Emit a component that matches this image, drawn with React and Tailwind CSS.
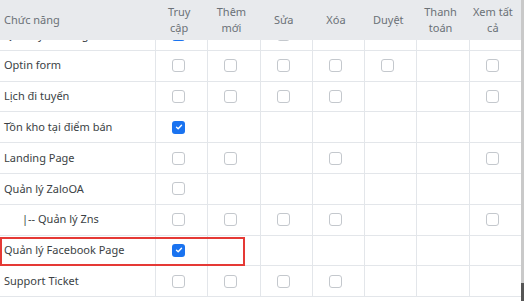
import React from "react";

const headers = [
  ["Truy", "cập"],
  ["Thêm", "mới"],
  ["Sửa"],
  ["Xóa"],
  ["Duyệt"],
  ["Thanh", "toán"],
  ["Xem tất", "cả"],
];

// 0 = none, 1 = unchecked, 2 = checked
const rows = [
  { name: "Quản lý Landing", cells: [2, 0, 1, 0, 0, 0, 0] },
  { name: "Optin form", cells: [1, 1, 1, 1, 1, 0, 1] },
  { name: "Lịch đi tuyến", cells: [1, 1, 1, 1, 0, 0, 1] },
  { name: "Tồn kho tại điểm bán", cells: [2, 0, 0, 0, 0, 0, 0] },
  { name: "Landing Page", cells: [1, 1, 0, 1, 0, 0, 1] },
  { name: "Quản lý ZaloOA", cells: [1, 0, 0, 0, 0, 0, 0] },
  { name: "|-- Quản lý Zns", indent: true, cells: [1, 1, 1, 1, 0, 0, 1] },
  { name: "Quản lý Facebook Page", cells: [2, 0, 0, 0, 0, 0, 0], marked: true },
  { name: "Support Ticket", cells: [1, 1, 1, 1, 0, 0, 0] },
];

function Box({ v }) {
  if (v === 0) return null;
  if (v === 2)
    return (
      <span className="flex h-[13px] w-[13px] items-center justify-center rounded-[3px] bg-[#1a73f0]">
        <svg width="8" height="8" viewBox="0 0 8 8">
          <path d="M1.5 4.2 L3.2 5.8 L6.5 2.3" fill="none" stroke="white" strokeWidth="1.4" strokeLinecap="round" strokeLinejoin="round" />
        </svg>
      </span>
    );
  return <span className="block h-[13px] w-[13px] rounded-[3px] border border-[#c4c8cd] bg-white" />;
}

export default function App() {
  return (
    <div className="flex h-[301px] w-[524px] overflow-hidden bg-white font-['Noto_Sans','Open_Sans',sans-serif] text-[11px] text-[#3b3f44]">
      <div className="flex w-[521px] flex-col">
        <div className="grid h-[40px] shrink-0 grid-cols-[155px_repeat(7,1fr)] bg-[#e8eaed] text-[#6b7177]">
          <div className="flex items-center pl-[4px]">Chức năng</div>
          {headers.map((h, i) => (
            <div key={i} className="flex flex-col items-center justify-center pr-[4px] leading-[16px]">
              {h.map((t, j) => (
                <span key={j}>{t}</span>
              ))}
            </div>
          ))}
        </div>
        <div className="flex-1 overflow-hidden">
          <div className="mt-[-20px]">
            {rows.map((r, i) => (
              <div
                key={i}
                className="relative grid h-[30.8px] grid-cols-[155px_repeat(7,1fr)] border-b border-[#e3e6ea]"
              >
                <div className={`flex items-center ${r.indent ? "pl-[22px]" : "pl-[4px]"}`}>{r.name}</div>
                {r.cells.map((c, j) => (
                  <div key={j} className="flex items-center justify-center border-l border-[#e3e6ea] pr-[6px]">
                    <Box v={c} />
                  </div>
                ))}
                {r.marked && (
                  <div className="pointer-events-none absolute left-0 top-[1px] bottom-[-1px] w-[245px] border-2 border-[#e53935]" />
                )}
              </div>
            ))}
          </div>
        </div>
      </div>
      <div className="flex w-[3px] flex-col bg-[#c9c9c9]">
        <div className="flex-1" />
        <div className="h-[18px] bg-[#555555]" />
      </div>
    </div>
  );
}
